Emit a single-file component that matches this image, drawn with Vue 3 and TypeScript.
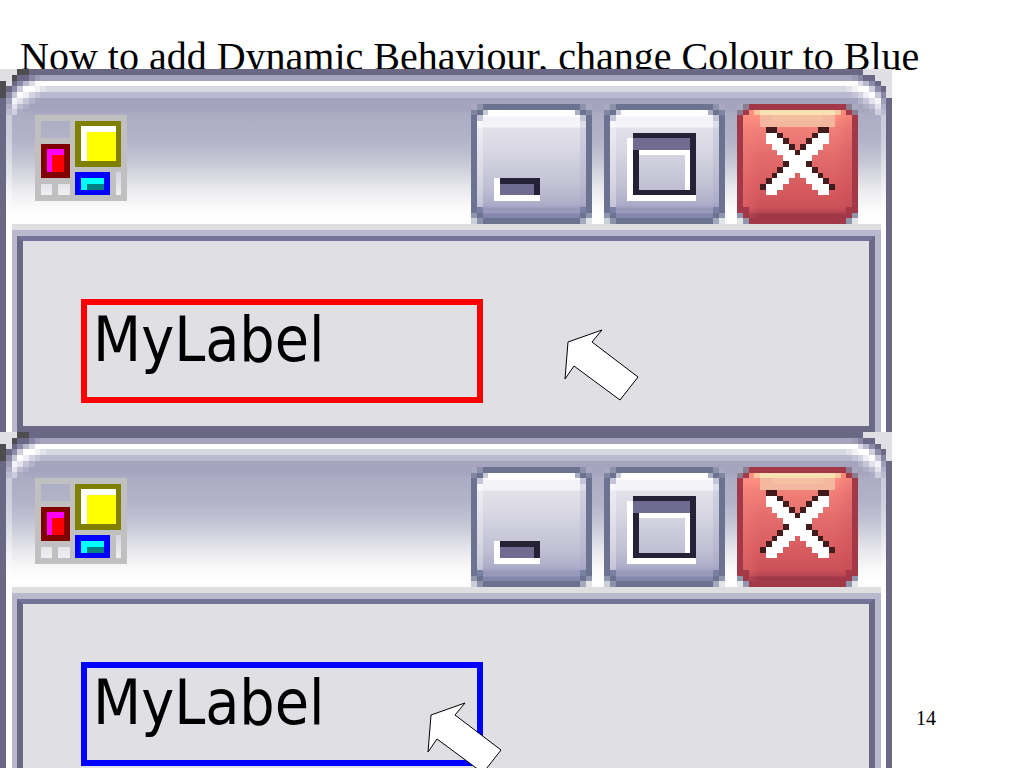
<script setup lang="ts">
type Cell = [x: number, y: number, w: number, h: number, fill: string]

interface Demo {
  id: string
  state: 'red' | 'blue'
}

const demos: Demo[] = [
  { id: 'before', state: 'red' },
  { id: 'after', state: 'blue' },
]

const dark = '#6a6885'
const pale = '#e0dfe3'

const curve: Cell[] = [
  [3, 1, 2, 1, dark], [5, 1, 1, 1, '#8886a3'], [6, 1, 1, 1, '#9c9ab5'],
  [2, 2, 1, 1, dark], [3, 2, 1, 1, '#8c8aa8'], [4, 2, 1, 1, '#b9b8cc'], [5, 2, 1, 1, '#dcdbe6'],
  [1, 3, 1, 1, dark], [2, 3, 1, 1, '#8c8aa8'], [3, 3, 1, 1, '#cfcede'], [4, 3, 2, 1, '#ffffff'], [6, 3, 1, 1, '#f1f1f6'], [7, 3, 1, 1, '#e2e2eb'],
  [1, 4, 1, 1, '#8886a3'], [2, 4, 1, 1, '#c8c7d8'], [3, 4, 1, 1, '#ffffff'], [4, 4, 1, 1, '#efeff5'], [5, 4, 1, 1, '#d4d3e1'], [6, 4, 1, 1, '#c6c5d8'],
  [1, 5, 1, 1, '#a09fb9'], [2, 5, 1, 1, '#f4f4f8'], [3, 5, 1, 1, '#e2e1ec'], [4, 5, 1, 1, '#c6c5d7'], [5, 5, 1, 1, '#b3b2c9'],
  [1, 6, 1, 1, '#b0afc6'], [2, 6, 1, 1, '#e4e3ed'], [3, 6, 1, 1, '#bfbed1'], [4, 6, 1, 1, '#afaec6'],
  [1, 7, 1, 1, '#bcbbd0'], [2, 7, 1, 1, '#cfcede'], [3, 7, 1, 1, '#adacc4'],
]

const leftCorner: Cell[] = [
  [0, 0, 3, 1, pale], [3, 0, 2, 1, '#4d4d4f'], [0, 1, 2, 1, pale], [2, 1, 1, 1, '#4d4d4f'],
  [0, 2, 1, 3, '#4d4d4f'], [1, 2, 1, 1, pale], ...curve,
]

const rightCorner: Cell[] = [
  [0, 0, 5, 1, pale], [0, 1, 3, 1, pale], [0, 2, 2, 1, pale], [0, 3, 1, 2, pale], ...curve,
]

const appIcon: Cell[] = [
  [0, 0, 16, 1, '#c0c0c0'], [0, 1, 1, 14, '#c0c0c0'], [6, 1, 1, 14, '#c0c0c0'], [15, 1, 1, 14, '#c0c0c0'],
  [1, 4, 5, 1, '#c0c0c0'], [1, 11, 5, 1, '#c0c0c0'], [3, 12, 1, 2, '#c0c0c0'], [1, 14, 14, 1, '#c0c0c0'],
  [7, 9, 8, 1, '#c0c0c0'], [13, 10, 1, 4, '#c0c0c0'],
  [1, 5, 5, 6, '#800000'], [2, 6, 3, 4, '#ff00ff'], [3, 7, 2, 3, '#ff0000'],
  [7, 1, 8, 8, '#808000'], [8, 2, 6, 6, '#ffffff'], [9, 3, 5, 5, '#ffff00'],
  [7, 10, 6, 4, '#0000ff'], [8, 11, 4, 2, '#00ffff'], [9, 12, 3, 1, '#008080'],
]

const shade = '#a9a8c1'
const steel = '#6b7390'
const steelEdge: Cell[] = [
  [0, 0, 1, 1, shade], [20, 0, 1, 1, shade],
  [1, 0, 19, 1, steel], [0, 1, 1, 19, steel], [20, 1, 1, 19, steel], [1, 20, 19, 1, steel],
  [1, 0, 1, 1, '#8c92aa'], [19, 0, 1, 1, '#8c92aa'], [0, 1, 1, 1, '#7e86a0'], [20, 1, 1, 1, '#7e86a0'],
  [1, 1, 1, 1, steel], [19, 1, 1, 1, steel], [2, 1, 1, 1, '#c8cad8'], [18, 1, 1, 1, '#a9aec2'],
  [1, 2, 1, 1, '#c4c5d8'], [19, 2, 1, 1, '#c4c5d8'], [1, 19, 1, 1, steel], [19, 19, 1, 1, steel],
  [1, 18, 1, 1, '#7880a4'], [19, 18, 1, 1, '#7880a4'],
  [0, 19, 1, 1, '#8f97af'], [20, 19, 1, 1, '#8f97af'], [0, 20, 1, 1, '#cbd0d8'], [20, 20, 1, 1, '#e2e4e6'],
  [1, 20, 1, 1, '#8c92aa'], [19, 20, 1, 1, '#a4a9bb'],
]

const ink = '#252237'
const minimise: Cell[] = [
  ...steelEdge, [4, 13, 8, 4, '#ffffff'], [5, 13, 7, 3, ink], [5, 14, 6, 2, '#706c91'],
]
const maximise: Cell[] = [
  ...steelEdge, [4, 6, 1, 11, '#ffffff'], [4, 16, 12, 1, '#ffffff'],
  [5, 5, 11, 1, ink], [15, 5, 1, 11, ink], [5, 8, 1, 8, ink], [5, 15, 11, 1, ink],
  [5, 6, 10, 2, '#706c91'], [6, 8, 9, 1, '#ffffff'], [14, 8, 1, 7, '#ffffff'],
]

const wine = '#a33948'
const maroon = '#421c1c'
const close: Cell[] = [
  [0, 0, 1, 1, shade], [20, 0, 1, 1, shade],
  [3, 1, 15, 1, '#fbc9a0'], [4, 1, 13, 1, '#fae1b2'], [4, 2, 13, 2, '#f3b79f'], [6, 2, 9, 1, '#f5c0a2'],
  [1, 0, 19, 1, wine], [0, 1, 1, 19, wine], [20, 1, 1, 19, wine], [1, 20, 19, 1, wine],
  [1, 1, 1, 1, wine], [19, 1, 1, 1, wine], [1, 0, 1, 1, '#8c7c90'], [19, 0, 1, 1, '#8c7c90'],
  [0, 1, 1, 1, '#8c7c90'], [20, 1, 1, 1, '#8c7c90'], [1, 18, 1, 2, wine], [19, 18, 1, 2, wine],
  [0, 19, 1, 1, '#8f97af'], [20, 19, 1, 1, '#8f97af'], [1, 20, 1, 1, '#8f97af'], [19, 20, 1, 1, '#8f97af'],
  [0, 20, 1, 1, '#e2e4e6'], [20, 20, 1, 1, '#e2e4e6'],
  [5, 4, 2, 1, maroon], [14, 4, 2, 1, maroon],
  [5, 5, 2, 1, '#fff'], [7, 5, 1, 1, maroon], [13, 5, 1, 1, maroon], [14, 5, 2, 1, '#fff'],
  [5, 6, 3, 1, '#fff'], [8, 6, 1, 1, maroon], [12, 6, 1, 1, maroon], [13, 6, 3, 1, '#fff'],
  [6, 7, 3, 1, '#fff'], [9, 7, 1, 1, maroon], [11, 7, 1, 1, maroon], [12, 7, 3, 1, '#fff'],
  [7, 8, 3, 1, '#fff'], [10, 8, 1, 1, maroon], [11, 8, 3, 1, '#fff'],
  [8, 9, 5, 1, '#fff'], [8, 10, 1, 1, maroon], [9, 10, 3, 1, '#fff'], [12, 10, 1, 1, maroon],
  [7, 11, 1, 1, maroon], [8, 11, 5, 1, '#fff'], [13, 11, 1, 1, maroon],
  [6, 12, 1, 1, maroon], [7, 12, 3, 1, '#fff'], [11, 12, 3, 1, '#fff'], [14, 12, 1, 1, maroon],
  [5, 13, 1, 1, maroon], [6, 13, 3, 1, '#fff'], [12, 13, 3, 1, '#fff'], [15, 13, 1, 1, maroon],
  [4, 14, 1, 1, maroon], [5, 14, 3, 1, '#fff'], [13, 14, 3, 1, '#fff'], [16, 14, 1, 1, maroon],
  [5, 15, 2, 1, '#fff'], [14, 15, 2, 1, '#fff'],
]

const controls = [
  { name: 'Minimise', kind: 'plain', cells: minimise },
  { name: 'Maximise', kind: 'plain', cells: maximise },
  { name: 'Close', kind: 'danger', cells: close },
]
</script>

<template>
  <main class="slide">
    <h1 class="heading">Now to add Dynamic Behaviour, change Colour to Blue</h1>
    <div class="content">
      <div class="windows">
        <section v-for="demo in demos" :key="demo.id" class="window">
          <svg class="corner left" viewBox="0 0 8 8" shape-rendering="crispEdges" aria-hidden="true">
            <rect v-for="(c, i) in leftCorner" :key="i" :x="c[0]" :y="c[1]" :width="c[2]" :height="c[3]" :fill="c[4]" />
          </svg>
          <svg class="corner right" viewBox="0 0 8 8" shape-rendering="crispEdges" aria-hidden="true">
            <g transform="translate(8 0) scale(-1 1)">
              <rect v-for="(c, i) in rightCorner" :key="i" :x="c[0]" :y="c[1]" :width="c[2]" :height="c[3]" :fill="c[4]" />
            </g>
          </svg>
          <header class="titlebar">
            <svg class="app-icon" viewBox="0 0 16 15" preserveAspectRatio="none" shape-rendering="crispEdges" aria-hidden="true">
              <rect v-for="(c, i) in appIcon" :key="i" :x="c[0]" :y="c[1]" :width="c[2]" :height="c[3]" :fill="c[4]" />
            </svg>
            <div class="controls">
              <button v-for="control in controls" :key="control.name" type="button" class="control" :class="control.kind" :aria-label="control.name">
                <svg viewBox="0 0 21 21" preserveAspectRatio="none" shape-rendering="crispEdges" aria-hidden="true">
                  <rect v-for="(c, i) in control.cells" :key="i" :x="c[0]" :y="c[1]" :width="c[2]" :height="c[3]" :fill="c[4]" />
                </svg>
              </button>
            </div>
          </header>
          <div class="frame">
            <div class="bevel">
              <div class="client">
                <div class="label" :class="demo.state">MyLabel</div>
              </div>
            </div>
          </div>
          <svg class="pointer" :class="demo.state" viewBox="0 0 76 73" aria-hidden="true">
            <path d="M4 13 38 1 28 13 74 48 56 71 10 37 1 50Z" fill="#fff" stroke="#000" stroke-width="1" />
          </svg>
        </section>
      </div>
      <footer class="side">14</footer>
    </div>
  </main>
</template>

<style>
body {
  margin: 0;
  background: #fff;
}
</style>

<style scoped>
.slide {
  display: flex;
  flex-direction: column;
  height: 100vh;
  overflow: hidden;
  background: #fff;
  color: #000;
  font-family: "Liberation Serif", "Times New Roman", serif;
}

.heading {
  flex: none;
  box-sizing: border-box;
  height: 69px;
  margin: 0;
  padding: 34px 0 0 20px;
  font-size: 40px;
  line-height: 46px;
  font-weight: 400;
  white-space: nowrap;
}

.content {
  display: flex;
  flex: 1;
  min-height: 0;
}

.windows {
  flex: 1;
  min-width: 0;
}

.side {
  box-sizing: border-box;
  width: 132px;
  padding: 0 0 38px 24px;
  align-self: flex-end;
  font-size: 20px;
  line-height: 24px;
}

.window {
  position: relative;
  border: solid #6a6885;
  border-width: 0 6px;
  background: #fff;
}

.corner {
  position: absolute;
  top: 0;
  width: 46px;
  height: 46px;
}

.corner.left {
  left: -6px;
}

.corner.right {
  right: -6px;
}

.titlebar {
  display: flex;
  justify-content: space-between;
  align-items: flex-start;
  padding: 35px 28px 0 29px;
  background:
    linear-gradient(#ffffff60, #ffffff60) 0 46px / 6px 100% no-repeat,
    linear-gradient(#ffffff60, #ffffff60) 100% 46px / 5px 100% no-repeat,
    linear-gradient(
      #6a6885 0 6px, #a5a3bd 6px 12px, #ffffff 12px 17px, #d8d8e3 17px 23px,
      #bab9d0 23px 29px, #a5a3bd 29px 40px, #acacc4 46px, #b2b3c9 69px, #bfc0d1 86px,
      #d4d5df 104px, #ebebef 121px, #fafafa 138px, #ffffff 150px
    );
}

.app-icon {
  display: block;
  width: 92px;
  height: 86px;
  margin-top: 11px;
}

.controls {
  display: flex;
  gap: 12px;
}

.control {
  display: block;
  width: 121px;
  height: 120px;
  padding: 0;
  border: 0;
}

.control svg {
  display: block;
  width: 100%;
  height: 100%;
}

.plain {
  background:
    linear-gradient(90deg, #ffffff50 12px, transparent 12px 109px, #9c9cc340 109px) 0 0 / 100% 100%,
    linear-gradient(
      #ffffff 12px, #f4f3f7 13px 23px, #e3e2ea 24px, #d8d7e3 46px, #cdccdb 63px,
      #c3c2d5 80px, #b1b0cb 98px, #a5a4c5 103px, #999abb 104px 109px, #8386ad 110px
    );
}

.danger {
  background:
    linear-gradient(90deg, #ff8a8040 6px, transparent 23px 98px, #b4384828 110px),
    linear-gradient(#ff9080 12px, #f2807a 24px, #e46d6c 50px, #d95d60 80px, #cc5259 103px, #b84452 109px, #9e3849 110px);
}

.frame {
  margin: 0 5px 0 6px;
  border-top: 6px solid #dfdfe1;
}

.bevel {
  padding: 6px 6px 0 5px;
  background: #b9b8cc;
}

.client {
  padding: 58px 58px 23px;
  border: 6px solid #6a6885;
  border-top: 5px solid #75739a;
  background: #e0dfe3;
}

.label {
  box-sizing: border-box;
  width: 402px;
  max-width: 100%;
  height: 104px;
  padding: 0 0 0 6px;
  border: 6px solid;
  color: #000;
  font-family: "DejaVu Sans Condensed", "Liberation Sans", Arial, sans-serif;
  font-size: 62px;
  line-height: 70px;
}

.label.red {
  border-color: #ff0000;
}

.label.blue {
  border-color: #0000ff;
}

.pointer {
  position: absolute;
  width: 76px;
  height: 73px;
}

.pointer.red {
  top: 260px;
  left: 558px;
}

.pointer.blue {
  top: 270px;
  left: 421px;
}
</style>
